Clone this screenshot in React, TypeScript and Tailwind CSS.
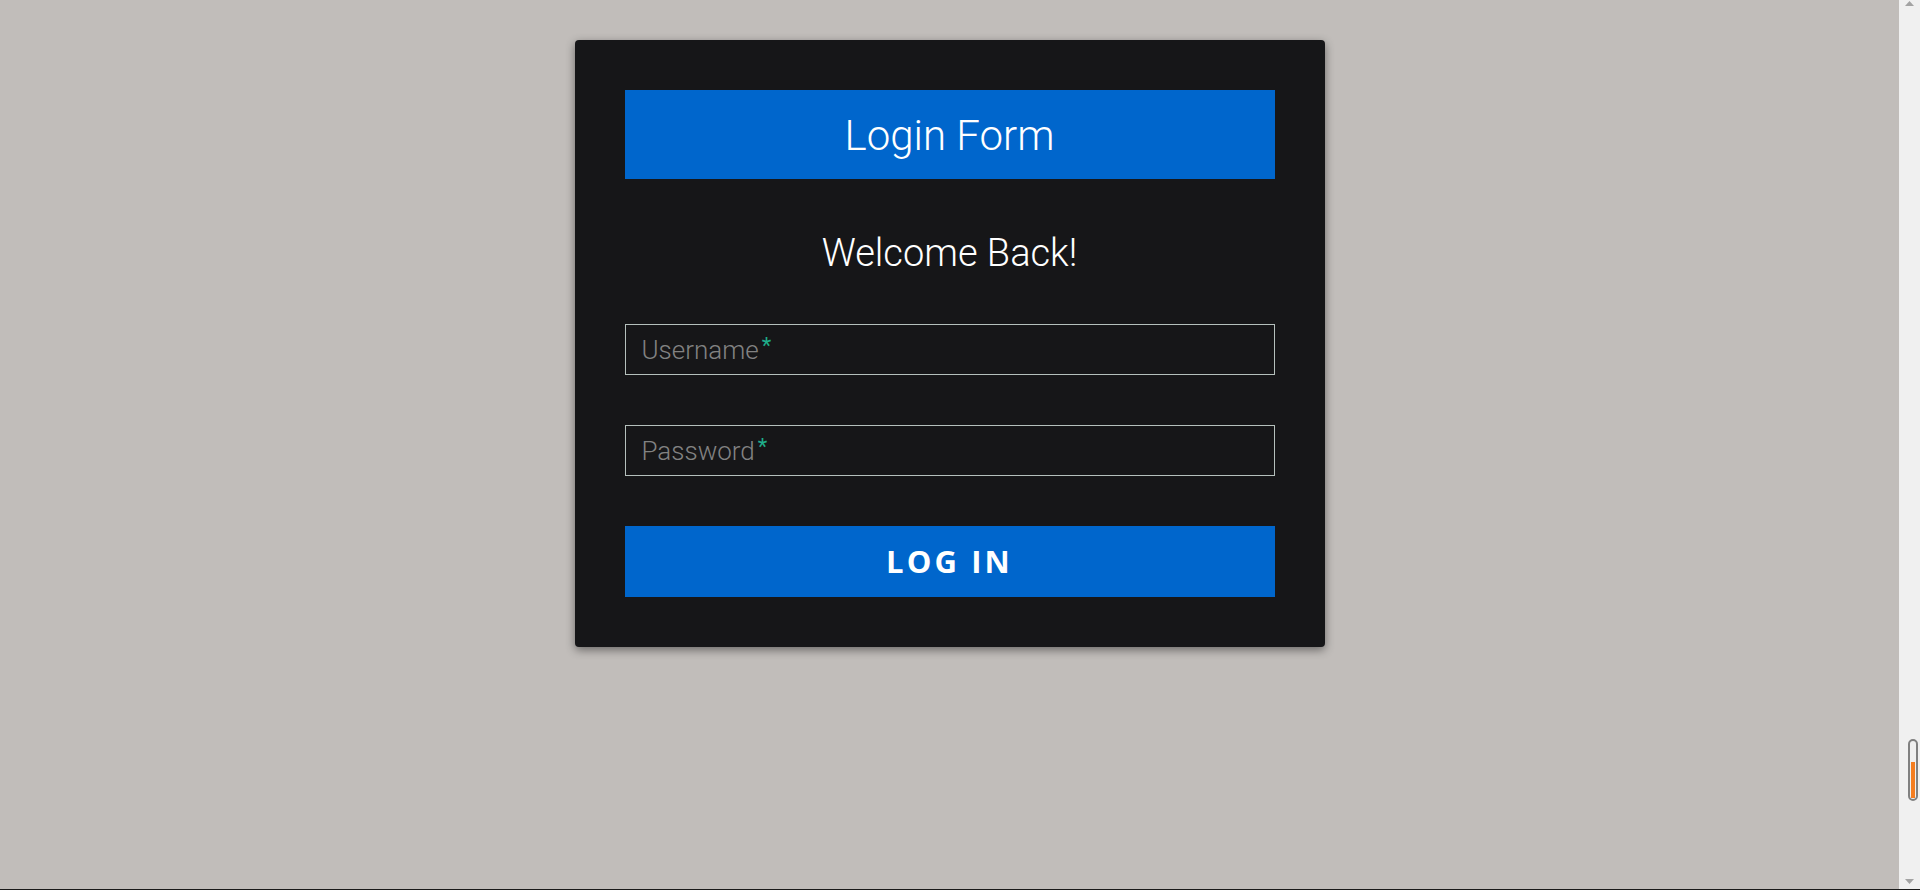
import React from "react";

export default function App() {
  return (
    <div className="flex h-[890px] w-[1920px] overflow-hidden border-b border-[#1a1a1a] bg-[#c1bdba]" style={{ fontFamily: "Roboto, 'Noto Sans', sans-serif" }}>
      <div className="flex flex-1 justify-center pt-[40px]">
        <div className="flex h-[607px] w-[750px] flex-col rounded-[4px] bg-[#161618] p-[50px] shadow-[0_3px_10px_rgba(0,0,0,0.45)]">
          <div className="flex h-[89px] items-center justify-center bg-[#0066cc] pt-[4px]">
            <span className="text-[42px] font-light leading-none text-white">Login Form</span>
          </div>
          <div className="flex h-[146px] items-center justify-center pt-[2px]">
            <span className="text-[38px] font-light leading-none text-white">Welcome Back!</span>
          </div>
          <div className="flex h-[51px] items-center border border-[#b5c0bc] px-[16px]">
            <span className="text-[26px] font-light leading-none text-[#828282]">Username</span>
            <span className="ml-[3px] self-start pt-[10px] text-[22px] leading-none text-[#1fae8a]">*</span>
          </div>
          <div className="mt-[50px] flex h-[51px] items-center border border-[#b5c0bc] px-[16px]">
            <span className="text-[26px] font-light leading-none text-[#828282]">Password</span>
            <span className="ml-[3px] self-start pt-[10px] text-[22px] leading-none text-[#1fae8a]">*</span>
          </div>
          <div className="mt-[50px] flex h-[71px] items-center justify-center bg-[#0066cc]">
            <span className="text-[31px] font-bold uppercase leading-none tracking-[0.1em] text-white" style={{ fontFamily: "'Open Sans', sans-serif" }}>Log In</span>
          </div>
        </div>
      </div>
      <div className="relative flex w-[21px] flex-col items-center justify-between bg-[#f0f0f0] py-[1px]">
        <svg width="9" height="5" viewBox="0 0 9 5"><polygon points="4.5,0 9,5 0,5" fill="#a3a3a3" /></svg>
        <div className="absolute left-[9px] top-[739px] h-[62px] w-[10px] rounded-full border-2 border-[#808080] bg-[#f0f0f0] p-[1px]">
          <div className="mt-[20px] h-[36px] w-[4px] bg-[#f47d20]" />
        </div>
        <svg width="9" height="5" viewBox="0 0 9 5" className="mb-[4px]"><polygon points="0,0 9,0 4.5,5" fill="#a3a3a3" /></svg>
      </div>
    </div>
  );
}
